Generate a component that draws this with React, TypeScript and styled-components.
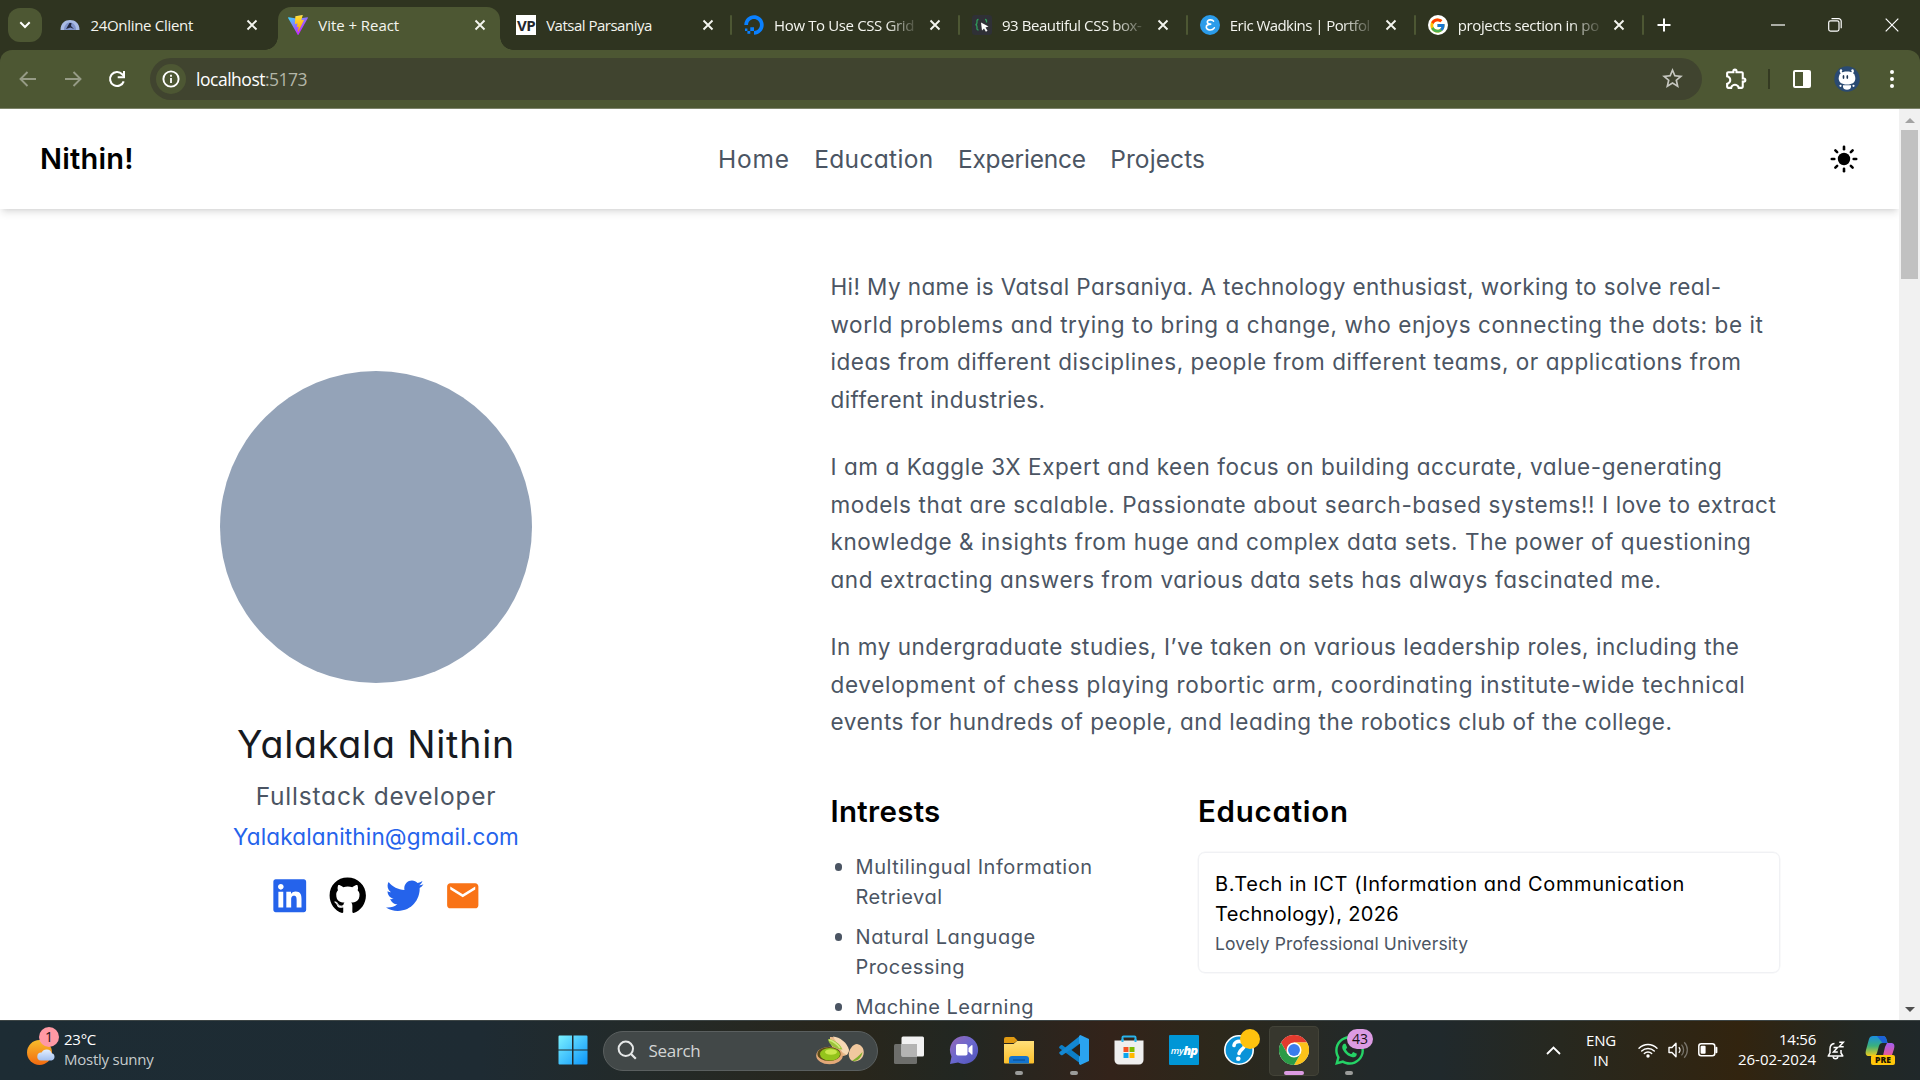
import React from "react";
import styled, { createGlobalStyle } from "styled-components";
import { FaGithub, FaLinkedin, FaTwitter, FaWhatsapp, FaDigitalOcean } from "react-icons/fa";
import { MdEmail, MdStarBorder, MdOutlineExtension } from "react-icons/md";
import { FcGoogle } from "react-icons/fc";

const uiFont = `"Open Sans", "Noto Sans", sans-serif`;
const pageFont = `Inter, "Open Sans", sans-serif`;

const GlobalStyle = createGlobalStyle`
  * { box-sizing: border-box; }
  html, body { margin: 0; padding: 0; overflow: hidden; }
  svg { display: block; flex: none; }
`;

const Screen = styled.div`
  width: 1920px;
  height: 1080px;
  display: flex;
  flex-direction: column;
  overflow: hidden;
  background: #fff;
  font-family: ${uiFont};
`;

const Text = styled.span<{ $ls?: number }>`
  display: block;
  white-space: nowrap;
  letter-spacing: ${(p) => p.$ls ?? 0}px;
`;

/* ---------- Browser chrome ---------- */

const TabStrip = styled.div`
  height: 50px;
  flex: none;
  display: flex;
  align-items: center;
  background: #2f3420;
`;

const TabSearch = styled.div`
  width: 34px;
  height: 34px;
  margin: 0 8.4px 0 8px;
  border-radius: 12px;
  background: #4d5733;
  display: flex;
  align-items: center;
  justify-content: center;
`;

const TabItem = styled.div<{ $active?: boolean; $divider?: boolean }>`
  position: relative;
  width: 227.9px;
  height: 50px;
  flex: none;
  display: flex;
  align-items: center;
  padding: 0 20.5px 0 10px;
  ${(p) =>
    p.$active &&
    `&::before {
      content: "";
      position: absolute;
      left: 0; top: 7px; bottom: 0; width: 222px;
      background: #4d5733;
      border-radius: 13px 13px 0 0;
    }
    &::after {
      content: "";
      position: absolute;
      left: -13px; bottom: 0; width: 248px; height: 13px;
      background:
        radial-gradient(circle at 0 0, transparent 12.5px, #4d5733 13px) left / 13px 13px no-repeat,
        radial-gradient(circle at 100% 0, transparent 12.5px, #4d5733 13px) right / 13px 13px no-repeat;
    }`}
  ${(p) =>
    p.$divider &&
    `&::after {
      content: "";
      position: absolute;
      right: 2px; top: 15px; width: 2px; height: 20px;
      border-radius: 1px;
      background: #4d5733;
    }`}
`;

const TabContent = styled.div`
  position: relative;
  z-index: 1;
  flex: 1;
  display: flex;
  align-items: center;
  justify-content: space-between;
`;

const TabTitle = styled.div<{ $fade?: boolean }>`
  width: 142px;
  margin-left: 10px;
  margin-right: auto;
  overflow: hidden;
  font-size: 15px;
  line-height: 22px;
  color: #f4f5ef;
  ${(p) => p.$fade && `mask-image: linear-gradient(90deg, #000 112px, transparent 146px);`}
`;

const NewTab = styled.div`
  width: 40px;
  margin-left: -2px;
  display: flex;
  justify-content: center;
`;

const WindowButtons = styled.div`
  margin-left: auto;
  display: grid;
  grid-template-columns: repeat(3, 57px);
  justify-items: center;
  align-items: center;
`;

const ToolbarBack = styled.div`
  height: 59px;
  flex: none;
  background: #2f3420;
`;

const Toolbar = styled.div`
  height: 59px;
  display: flex;
  align-items: center;
  padding: 0 0 1px 17px;
  background: #4d5733;
  border-bottom: 1px solid #7c8369;
  border-radius: 12px 12px 0 0;
`;

const NavButtons = styled.div`
  width: 133px;
  display: flex;
  gap: 22.5px;
`;

const AddressBar = styled.div`
  width: 1552px;
  height: 42px;
  display: flex;
  align-items: center;
  padding: 0 17px 0 6px;
  border-radius: 21px;
  background: #40442f;
  font-size: 17.5px;
  line-height: 24px;
  color: #fff;
`;

const SiteInfo = styled.div`
  width: 30px;
  height: 30px;
  margin-right: 10px;
  border-radius: 50%;
  background: #4d5733;
  display: flex;
  align-items: center;
  justify-content: center;
`;

const Port = styled(Text)`
  flex: 1;
  color: #b3b6a8;
`;

const Actions = styled.div`
  flex: 1;
  display: flex;
  align-items: center;
  padding-left: 22px;
`;

const ActionDivider = styled.div`
  width: 2px;
  height: 20px;
  margin: 0 22px 0 19px;
  background: #343a22;
`;

const ProfileButton = styled.div`
  margin: 0 29px 0 22px;
`;

/* ---------- Web page ---------- */

const Viewport = styled.div`
  height: 911px;
  flex: none;
  display: flex;
`;

const Page = styled.div`
  width: 1899px;
  overflow: hidden;
  font-family: ${pageFont};
  font-feature-settings: "cv11";
  color: #4b5563;
`;

const Scrollbar = styled.div`
  width: 21px;
  display: flex;
  flex-direction: column;
  align-items: center;
  padding: 9px 0 8px;
  background: #f1f1f1;
`;

const Thumb = styled.div`
  width: 17px;
  height: 149px;
  margin: 7px 0 auto;
  background: #c1c1c1;
`;

const Navbar = styled.header`
  height: 100px;
  display: grid;
  grid-template-columns: 678px 1fr 30px;
  align-items: center;
  padding: 0 40px;
  background: #fff;
  box-shadow: 0 5px 7.5px -1px rgba(0, 0, 0, 0.1), 0 2.5px 5px -2.5px rgba(0, 0, 0, 0.1);
`;

const Brand = styled.div`
  font-size: 29px;
  font-weight: 600;
  line-height: 40px;
  color: #000;
`;

const NavLinks = styled.nav`
  display: flex;
  gap: 24.3px;
  font-size: 24.5px;
  line-height: 35px;
`;

const Main = styled.main`
  display: grid;
  grid-template-columns: 752px 950px;
  column-gap: 78.5px;
  padding-top: 59px;
`;

const Profile = styled.section`
  display: flex;
  flex-direction: column;
  align-items: center;
  padding-top: 103px;
`;

const Avatar = styled.div`
  width: 312px;
  height: 312px;
  border-radius: 50%;
  background: #94a3b8;
`;

const Name = styled.h1`
  margin: 39px 0 0;
  font-size: 37.5px;
  font-weight: 400;
  line-height: 45px;
  color: #171a1f;
`;

const Role = styled.div`
  margin-top: 12px;
  font-size: 24.5px;
  line-height: 35px;
`;

const Email = styled.div`
  margin-top: 5px;
  font-size: 22.5px;
  line-height: 35px;
  color: #2563eb;
`;

const Socials = styled.div`
  display: flex;
  gap: 20px;
  margin-top: 22.5px;
`;

const About = styled.section`
  display: flex;
  flex-direction: column;
`;

const Paragraph = styled.p`
  margin: 0 0 30px;
  font-size: 22.5px;
  line-height: 37.5px;
`;

const Columns = styled.div`
  display: grid;
  grid-template-columns: 367.5px 582px;
  padding-top: 18.5px;
`;

const Heading = styled.h2`
  margin: 0 0 18px;
  font-size: 29.5px;
  font-weight: 600;
  line-height: 45px;
  color: #000;
`;

const List = styled.ul`
  margin: 0;
  padding: 0;
  list-style: none;
  display: flex;
  flex-direction: column;
  gap: 10px;
`;

const ListItem = styled.li`
  display: flex;
  font-size: 20px;
  line-height: 30px;
  &::before {
    content: "";
    width: 7.5px;
    height: 7.5px;
    margin: 11px 13.5px 0 4px;
    border-radius: 50%;
    background: #4b5563;
  }
`;

const Card = styled.div`
  height: 121px;
  padding: 16px 16px 0;
  border: 1.25px solid #f0f1f4;
  border-radius: 7px;
  box-shadow: 0 0 0 0.5px #f3f4f6;
`;

const Degree = styled.div`
  font-size: 20px;
  line-height: 30px;
  color: #000;
`;

const School = styled.div`
  font-size: 17.5px;
  line-height: 30px;
`;

/* ---------- Taskbar ---------- */

const Taskbar = styled.footer`
  height: 60px;
  flex: none;
  display: flex;
  align-items: center;
  border-top: 1px solid #3d4545;
  color: #fff;
  background: linear-gradient(
    90deg,
    #1d2c34 0,
    #1e2b33 480px,
    #232a29 640px,
    #29261b 850px,
    #222722 960px,
    #33231a 1110px,
    #2c281b 1220px,
    #22292a 1370px,
    #20292c 1440px,
    #27281f 1560px,
    #32240f 1740px,
    #222824 1860px,
    #20282a 1920px
  );
`;

const Weather = styled.div`
  width: 545px;
  display: flex;
  align-items: center;
  padding: 0 0 4px 24px;
  gap: 4px;
  font-size: 15px;
  line-height: 20px;
`;

const Muted = styled(Text)`
  color: #c6cbcd;
`;

const WeatherIcon = styled.div`
  position: relative;
  width: 36px;
  height: 44px;
  display: flex;
  align-items: flex-end;
  padding-bottom: 2px;
`;

const Badge = styled.span<{ $bg: string; $w: number; $right: number; $top: number }>`
  position: absolute;
  right: ${(p) => p.$right}px;
  top: ${(p) => p.$top}px;
  width: ${(p) => p.$w}px;
  height: 20px;
  border-radius: 10px;
  background: ${(p) => p.$bg};
  color: #1a1014;
  font-size: 14px;
  line-height: 20px;
  text-align: center;
`;

const SearchBox = styled.div`
  width: 275px;
  height: 40px;
  margin: 0 3.5px 0 3px;
  display: flex;
  align-items: center;
  padding: 0 13px 1px 13px;
  border: 1px solid #5a5f5f;
  border-radius: 20px;
  background: #424848;
  font-size: 17px;
  color: #d3d5d5;
`;

const SearchLabel = styled(Text)`
  flex: 1;
  margin-left: 11.5px;
`;

const Slot = styled.div<{ $active?: boolean; $indicator?: "open" | "focused" }>`
  position: relative;
  width: ${(p) => (p.$active ? 50 : 55)}px;
  height: 50px;
  margin: ${(p) => (p.$active ? "0 2.5px" : 0)};
  flex: none;
  display: flex;
  align-items: center;
  justify-content: center;
  padding-bottom: 1px;
  ${(p) => p.$active && `background: #37372e; border-radius: 5px; box-shadow: inset 0 0 0 1px #434338;`}
  ${(p) =>
    p.$indicator &&
    `&::after {
      content: "";
      position: absolute;
      bottom: 1px;
      width: ${p.$indicator === "focused" ? 20 : 8}px;
      height: 4px;
      border-radius: 2px;
      background: ${p.$indicator === "focused" ? "#dc9be3" : "#9b9c9a"};
    }`}
`;

const MyHp = styled.div`
  width: 30px;
  height: 30px;
  display: flex;
  align-items: center;
  justify-content: center;
  background: #0096d6;
  border-radius: 1px;
  font-size: 9.5px;
  font-style: italic;
  font-weight: 600;
  letter-spacing: -0.3px;
  b { font-size: 13px; letter-spacing: -1px; }
`;

const Tray = styled.div`
  margin-left: auto;
  padding: 0 16px 1px 0;
  display: flex;
  align-items: center;
  font-size: 15px;
  line-height: 20px;
`;

const TrayCell = styled.div<{ $w: number; $align?: string; $lift?: number }>`
  width: ${(p) => p.$w}px;
  padding-bottom: ${(p) => p.$lift ?? 0}px;
  display: flex;
  flex-direction: column;
  align-items: ${(p) => p.$align ?? "center"};
`;

const Copilot = styled.div`
  position: relative;
  width: 30px;
  height: 30px;
`;

const PreTag = styled.span`
  position: absolute;
  left: 6px;
  bottom: 0;
  width: 24px;
  height: 10px;
  border-radius: 2px;
  background: #ffc60a;
  color: #1b1300;
  font-size: 8.5px;
  font-weight: 800;
  line-height: 10px;
  text-align: center;
`;

/* ---------- Icons ---------- */

const CloseIcon = () => (
  <svg width="12" height="12" viewBox="0 0 12 12">
    <path d="M1.500 1.500l9 9M10.500 1.500l-9 9" stroke="#f4f5ef" strokeWidth="1.900" />
  </svg>
);

const DomeIcon = () => (
  <svg width="20" height="20" viewBox="0 0 20 20">
    <path d="M0.500 15C0.500 8 5 5 10 5s9.500 3 9.500 10z" fill="#a9bbe4" />
    <path d="M4 15c0-5 3-7.500 6-7.500s6 2.500 6 7.500z" fill="#7f93c9" />
    <path d="M6 14l3.500-6h2L11 11l3 3-3.500-1.500z" fill="#20263d" />
  </svg>
);

const ViteIcon = () => (
  <svg width="20" height="20" viewBox="0 0 256 257">
    <defs>
      <linearGradient id="va" x1="0" x2="0.58" y1="0.07" y2="0.79">
        <stop offset="0" stopColor="#41d1ff" />
        <stop offset="1" stopColor="#bd34fe" />
      </linearGradient>
      <linearGradient id="vb" x1="0.43" x2="0.5" y1="0.02" y2="0.89">
        <stop offset="0" stopColor="#ffea83" />
        <stop offset="0.08" stopColor="#ffdd35" />
        <stop offset="1" stopColor="#ffa800" />
      </linearGradient>
    </defs>
    <path fill="url(#va)" d="M255 37.900L134.900 252.700c-2.500 4.400-8.800 4.500-11.300 0L.9 37.900c-2.700-4.800 1.400-10.600 6.800-9.700l120.500 21.500c.8.100 1.600.1 2.300 0l117.900-21.500c5.400-1 9.500 4.900 6.600 9.700z" />
    <path fill="url(#vb)" d="M185.400.1L96.400 17.500c-1.500.3-2.500 1.500-2.600 3l-5.500 92.400c-.1 2.200 1.900 3.900 4 3.400l24.800-5.700c2.300-.5 4.400 1.500 3.900 3.800l-7.400 36.100c-.5 2.400 1.800 4.500 4.100 3.800l15.300-4.700c2.400-.7 4.600 1.400 4.100 3.800l-11.700 56.600c-.7 3.500 4 5.500 5.900 2.500l1.300-2 72.500-144.700c1.200-2.400-.9-5.200-3.500-4.700l-25.500 4.900c-2.400.5-4.400-1.800-3.800-4.100l16.700-57.700c.7-2.300-1.300-4.600-3.600-4.100z" />
  </svg>
);

const VpIcon = styled.div`
  width: 20px;
  height: 20px;
  flex: none;
  background: #fff;
  color: #23262d;
  font: 700 15px/20px "Open Sans", sans-serif;
  letter-spacing: -0.5px;
  text-align: center;
`;

const CursorIcon = () => (
  <svg width="20" height="20" viewBox="0 0 20 20">
    <rect width="20" height="20" rx="3" fill="#2f3036" />
    <path d="M6.500 4.500c-2 0-1.500 1.500-1.500 3s-.5 2-1.500 2.200c1 .2 1.500.8 1.500 2.300s-.5 3 1.500 3M13 4.500c2 0 1.500 1.500 1.500 3" fill="none" stroke="#2f9e5b" strokeWidth="1.300" />
    <path d="M9 7.500l7.500 4-3 1 2 3.200-1.600 1-1.900-3.300-2 2z" fill="#fff" />
  </svg>
);

const EricIcon = () => (
  <svg width="20" height="20" viewBox="0 0 20 20">
    <circle cx="10" cy="10" r="10" fill="#2b9cea" />
    <path d="M13.500 6.200C12.500 4.300 7 4.300 7.300 7.200c.2 1.700 2 2.100 4 2-3.300 0-5.300 1-5 3.200.4 3.300 6.200 3.300 8 .4" fill="none" stroke="#fff" strokeWidth="1.600" strokeLinecap="round" />
  </svg>
);

const GoogleBubble = styled.div`
  width: 20px;
  height: 20px;
  flex: none;
  border-radius: 50%;
  background: #fff;
  display: flex;
  align-items: center;
  justify-content: center;
`;

const ArrowIcon = ({ flip }: { flip?: boolean }) => (
  <svg width="22" height="22" viewBox="0 0 22 22">
    <path
      d={flip ? "M3 11h15.500M11.500 4l7 7-7 7" : "M19 11H3.500M10.500 4l-7 7 7 7"}
      fill="none" stroke="#969b86" strokeWidth="1.900"
    />
  </svg>
);

const ReloadIcon = () => (
  <svg width="22" height="22" viewBox="0 0 22 22">
    <path d="M17.700 13.300A7 7 0 1 1 16.200 6.200L18 8" fill="none" stroke="#fff" strokeWidth="2.100" />
    <path d="M18 3v6.300h-6.300" fill="none" stroke="#fff" strokeWidth="2" />
  </svg>
);

const InfoIcon = () => (
  <svg width="18" height="18" viewBox="0 0 18 18">
    <circle cx="9" cy="9" r="7.600" fill="none" stroke="#fff" strokeWidth="1.900" />
    <path d="M9 8v5M9 4.800v1.900" stroke="#fff" strokeWidth="1.800" />
  </svg>
);

const SidePanelIcon = () => (
  <svg width="20" height="20" viewBox="0 0 20 20">
    <path d="M3 1h14a2 2 0 0 1 2 2v14a2 2 0 0 1-2 2H3a2 2 0 0 1-2-2V3a2 2 0 0 1 2-2zm0 2v14h8V3z" fill="#fff" />
  </svg>
);

const AvatarIcon = () => (
  <svg width="26" height="26" viewBox="0 0 26 26">
    <circle cx="13" cy="13" r="12.700" fill="#2a4a72" />
    <circle cx="7" cy="4.500" r="1.200" fill="#fff" />
    <circle cx="18.500" cy="4.500" r="1.200" fill="#fff" />
    <path d="M13 5.500c5.500 0 8.300 2.500 8.300 7 0 3.800-2.800 6-8.300 6s-8.300-2.200-8.300-6c0-4.500 2.800-7 8.300-7z" fill="#fff" />
    <path d="M6.300 5l2.200 3.500M19.300 5l-2.200 3.500" stroke="#fff" strokeWidth="1.800" />
    <path d="M9 19.200h8v1.500c0 2-1.800 3-4 3s-4-1-4-3z" fill="#fff" />
    <circle cx="6.500" cy="19.800" r="1.100" fill="#fff" />
    <circle cx="19.500" cy="19.800" r="1.100" fill="#fff" />
    <ellipse cx="9.500" cy="11" rx="0.900" ry="1.900" fill="#1d3350" />
    <ellipse cx="13.300" cy="11" rx="0.900" ry="1.900" fill="#1d3350" />
  </svg>
);

const MenuDots = () => (
  <svg width="6" height="20" viewBox="0 0 6 20">
    <circle cx="3" cy="3" r="2" fill="#fff" />
    <circle cx="3" cy="10" r="2" fill="#fff" />
    <circle cx="3" cy="17" r="2" fill="#fff" />
  </svg>
);

const SunIcon = () => (
  <svg width="30" height="30" viewBox="-15 -15 30 30">
    <circle r="6.200" fill="#000" />
    {[0, 45, 90, 135, 180, 225, 270, 315].map((a) => (
      <path key={a} d="M0 -12.200V-9.700" transform={`rotate(${a})`} stroke="#000" strokeWidth="2.600" strokeLinecap="round" />
    ))}
  </svg>
);

const WeatherGlyph = () => (
  <svg width="32" height="38" viewBox="0 0 32 38">
    <defs>
      <linearGradient id="sun" x1="0" y1="0" x2="0" y2="1">
        <stop offset="0" stopColor="#f8bd2c" />
        <stop offset="1" stopColor="#f26a10" />
      </linearGradient>
      <linearGradient id="cloud" x1="0" y1="0" x2="0" y2="1">
        <stop offset="0" stopColor="#e3efff" />
        <stop offset="1" stopColor="#a3c0f0" />
      </linearGradient>
    </defs>
    <circle cx="15.500" cy="21.500" r="12.500" fill="url(#sun)" />
    <path d="M17 29.500a4 4 0 0 1 .6-8 5.500 5.500 0 0 1 10.200.8 3.700 3.700 0 0 1-.3 7.200z" fill="url(#cloud)" />
  </svg>
);

const WindowsIcon = () => (
  <svg width="30" height="30" viewBox="0 0 30 30">
    <defs>
      <linearGradient id="win" x1="0" y1="0" x2="30" y2="30" gradientUnits="userSpaceOnUse">
        <stop offset="0" stopColor="#7df3ff" />
        <stop offset="1" stopColor="#0a93fa" />
      </linearGradient>
    </defs>
    <path d="M1.500.5H14v14H.5v-13a1 1 0 0 1 1-1zM15.500.5h13a1 1 0 0 1 1 1v13h-14zM.5 15.500H14v14H1.500a1 1 0 0 1-1-1zM15.500 15.500h14v13a1 1 0 0 1-1 1h-13z" fill="url(#win)" />
  </svg>
);

const SearchGlyph = () => (
  <svg width="20" height="20" viewBox="0 0 20 20">
    <circle cx="8.800" cy="8.800" r="7.200" fill="none" stroke="#e6e8e8" strokeWidth="2" />
    <path d="M13.800 13.800l5 5" stroke="#e6e8e8" strokeWidth="2.200" />
  </svg>
);

const Pistachio = () => (
  <svg width="48" height="29" viewBox="0 0 48 29">
    <path d="M14 1c8-1 17 6 19 14-1 4-4 5-7 5C19 18 13 8 14 1z" fill="#e8b98a" />
    <path d="M17 .5c7 .5 14 6 16 13.500l-2 5-5-3z" fill="#f6d8b4" />
    <path d="M12 3c4 0 12 4 14.500 10.500C20 14 13 9.500 12 3z" fill="#9cc43a" />
    <path d="M13 4c4 1 8 4 11 8" fill="none" stroke="#d0ea7c" strokeWidth="1.500" />
    <ellipse cx="13.500" cy="19.500" rx="13.300" ry="8.800" fill="#e3a878" />
    <ellipse cx="13" cy="18" rx="11.600" ry="6.900" fill="#5c4d16" />
    <ellipse cx="14" cy="18.200" rx="10" ry="6.300" fill="#94c41c" />
    <ellipse cx="15" cy="16" rx="6" ry="2.800" fill="#cbe84c" />
    <path d="M41 8c6 1 8 7 6 12-2 5-9 7-12 4s-3-8 0-12c2-3 4-4 6-4z" fill="#f0c89e" />
    <path d="M46.500 16c-1 6-5 9.500-10.500 9C39 23 43 20 46.500 16z" fill="#7fae2c" />
  </svg>
);

const TaskViewIcon = () => (
  <svg width="30" height="28" viewBox="0 0 30 28">
    <rect x="0" y="8" width="23" height="20" rx="1.500" fill="#6d6e6b" />
    <rect x="7.500" y="0.500" width="22.500" height="20" rx="1.500" fill="#f2f2f2" />
    <rect x="7.500" y="8" width="15.500" height="12.500" fill="#b4b4b3" />
  </svg>
);

const TeamsIcon = () => (
  <svg width="30" height="30" viewBox="0 0 30 30">
    <defs>
      <linearGradient id="tm" x1="0" y1="0" x2="1" y2="1">
        <stop offset="0" stopColor="#9867b5" />
        <stop offset="0.5" stopColor="#6a68cf" />
        <stop offset="1" stopColor="#4f52b8" />
      </linearGradient>
    </defs>
    <path d="M15 1a14 14 0 1 1-6 26.600L1 29l1.500-7.500A14 14 0 0 1 15 1z" fill="url(#tm)" />
    <rect x="7" y="9" width="11.500" height="11.500" rx="1.800" fill="#fff" />
    <path d="M19.500 13l3-2.800q1-.7 1 .6v8q0 1.300-1 .6l-3-2.800z" fill="#fff" />
  </svg>
);

const ExplorerIcon = () => (
  <svg width="30" height="30" viewBox="0 0 30 30">
    <defs>
      <linearGradient id="fd" x1="0" y1="0" x2="0" y2="1">
        <stop offset="0" stopColor="#ffe07a" />
        <stop offset="1" stopColor="#fcbf2b" />
      </linearGradient>
    </defs>
    <path d="M0 4a2 2 0 0 1 2-2h8l3.500 3.500L10 8H0z" fill="#e09a12" />
    <path d="M0 9h9.500L13 6h17v21.500a1 1 0 0 1-1 1H1a1 1 0 0 1-1-1z" fill="url(#fd)" />
    <path d="M5 28.500V24a3 3 0 0 1 3-3h14a3 3 0 0 1 3 3v4.500z" fill="#1374cf" />
    <path d="M9 25h12" stroke="#0b529b" strokeWidth="1.300" />
  </svg>
);

const CodeIcon = () => (
  <svg width="30" height="30" viewBox="0 0 30 30">
    <path d="M22 .5L8.500 14 3.500 10.200Q2.600 9.600 1.800 10.300L.5 11.500q-.8.900 0 1.700L22 29z" fill="#0c7ec6" />
    <path d="M21.500 8L3.600 20q-.9.600-1.700-.1L.6 18.700q-.8-.9 0-1.700L21 .8z" fill="#1488d3" />
    <path d="M21.300 0L30 4v22l-8.700 4-1.300-1V22V8V1z" fill="#2aa3f0" />
    <path d="M21 8.500v13L12.500 15z" fill="#2b2219" />
  </svg>
);

const StoreIcon = () => (
  <svg width="30" height="30" viewBox="0 0 30 30">
    <path d="M8.500 7V2.500a1 1 0 0 1 1-1h11a1 1 0 0 1 1 1V7" fill="none" stroke="#29b3ec" strokeWidth="2" />
    <path d="M.5 5.500h29V25a4.500 4.500 0 0 1-4.500 4.500H5A4.500 4.500 0 0 1 .5 25z" fill="#efefef" />
    <path d="M8.500 7V4M21.500 7V4" stroke="#29b3ec" strokeWidth="2" />
    <path d="M9.500 12h5v5h-5z" fill="#f35325" />
    <path d="M15.500 12h5v5h-5z" fill="#7fba00" />
    <path d="M9.500 18h5v5h-5z" fill="#0aa4ef" />
    <path d="M15.500 18h5v5h-5z" fill="#ffb900" />
  </svg>
);

const HelpIcon = () => (
  <svg width="30" height="30" viewBox="0 0 30 30">
    <circle cx="15" cy="15" r="14.200" fill="#0a93d8" stroke="#fff" strokeWidth="1.600" />
    <path d="M10 10.500c.5-6 11.500-5 10.500.5-.6 3-4.500 3.500-5.500 7.500" fill="none" stroke="#fff" strokeWidth="3.600" strokeLinecap="round" />
    <circle cx="14.300" cy="23.800" r="2.300" fill="#fff" />
  </svg>
);

const ChromeIcon = () => (
  <svg width="30" height="30" viewBox="0 0 48 48">
    <circle cx="24" cy="24" r="24" fill="#fff" />
    <path d="M24 12h20.800A24 24 0 0 0 3.200 12l10.400 18z" fill="#e33b2e" />
    <path d="M34.400 30L24 48a24 24 0 0 0 20.800-36H24z" fill="#fcc319" />
    <path d="M13.600 30L3.200 12A24 24 0 0 0 24 48l10.400-18z" fill="#2b9b47" />
    <circle cx="24" cy="24" r="12" fill="#fff" />
    <circle cx="24" cy="24" r="9.500" fill="#3b7ded" />
  </svg>
);

const ChevronUp = () => (
  <svg width="15" height="9" viewBox="0 0 15 9">
    <path d="M1 8l6.500-6.500L14 8" fill="none" stroke="#fff" strokeWidth="1.800" />
  </svg>
);

const WifiIcon = () => (
  <svg width="20" height="16" viewBox="0 0 20 16">
    <path d="M1 6.200a12.700 12.700 0 0 1 18 0M3.700 9a9 9 0 0 1 12.600 0M6.300 11.600a5.200 5.200 0 0 1 7.400 0" fill="none" stroke="#fff" strokeWidth="1.400" strokeLinecap="round" />
    <circle cx="10" cy="14" r="1.700" fill="#fff" />
  </svg>
);

const VolumeIcon = () => (
  <svg width="20" height="18" viewBox="0 0 20 18">
    <path d="M1 6.500h3l4-4.200v13.400L4 11.500H1z" fill="none" stroke="#fff" strokeWidth="1.400" strokeLinejoin="round" />
    <path d="M10.800 6.200a4 4 0 0 1 0 5.600" fill="none" stroke="#fff" strokeWidth="1.300" />
    <path d="M13.500 3.600a8 8 0 0 1 0 10.800M16.200 1.300a11 11 0 0 1 0 15.400" fill="none" stroke="#77736a" strokeWidth="1.300" />
  </svg>
);

const BatteryIcon = () => (
  <svg width="20" height="14" viewBox="0 0 20 14">
    <rect x="0.800" y="0.800" width="16" height="12" rx="2.500" fill="none" stroke="#fff" strokeWidth="1.500" />
    <rect x="2.600" y="2.800" width="5" height="8" rx="1" fill="#fff" />
    <path d="M18.400 4.800v4.400" stroke="#fff" strokeWidth="2" strokeLinecap="round" />
  </svg>
);

const BellIcon = () => (
  <svg width="18" height="19" viewBox="0 0 18 19">
    <path d="M7.500 2.500c-2.800.3-4.500 2.700-4.500 5.500v3.800L1.200 15h14.600L14 12V9" fill="none" stroke="#fff" strokeWidth="1.500" strokeLinejoin="round" />
    <path d="M6.200 15.500a2.300 2.300 0 0 0 4.600 0" fill="none" stroke="#fff" strokeWidth="1.500" />
    <path d="M6.500 6.500h4L6.500 11h4.300M12.300 1.300h4l-4 4.400h4.400" fill="none" stroke="#fff" strokeWidth="1.500" />
  </svg>
);

const CopilotIcon = () => (
  <svg width="30" height="28" viewBox="0 0 30 28">
    <defs>
      <linearGradient id="ca" x1="0" y1="0" x2="0" y2="1">
        <stop offset="0" stopColor="#1a8fe0" />
        <stop offset="0.500" stopColor="#3ab07c" />
        <stop offset="1" stopColor="#f0cc1c" />
      </linearGradient>
      <linearGradient id="cb" x1="0" y1="0" x2="0" y2="1">
        <stop offset="0" stopColor="#a25ff0" />
        <stop offset="0.600" stopColor="#e3589e" />
        <stop offset="1" stopColor="#f47c50" />
      </linearGradient>
    </defs>
    <path d="M8 1h10c3 0 3.500 3 4.500 7h-5c-2 0-3 1-3.700 3.500L12 18c-.6 2-2 3-4 3H4c-3 0-4-2-3-6L4 4c.6-2 2-3 4-3z" fill="url(#ca)" />
    <path d="M12 1h6c3 0 3.500 3 4.500 7h-5z" fill="#1c62d6" />
    <path d="M22 8h4c3 0 4 2 3 6l-3 9c-.6 2-2 4-5 4h-7c2 0 3-2 3.500-4L20 12z" fill="url(#cb)" />
  </svg>
);

/* ---------- Data ---------- */

type Tab = { title: string; ls: number; icon: React.ReactNode; active?: boolean; divider?: boolean; fade?: boolean };

const tabs: Tab[] = [
  { title: "24Online Client", ls: -0.3, icon: <DomeIcon /> },
  { title: "Vite + React", ls: -0.05, icon: <ViteIcon />, active: true },
  { title: "Vatsal Parsaniya", ls: -0.5, icon: <VpIcon>VP</VpIcon>, divider: true },
  { title: "How To Use CSS Grid", ls: -0.37, icon: <FaDigitalOcean size={20} color="#0a80ff" />, divider: true, fade: true },
  { title: "93 Beautiful CSS box-", ls: -0.43, icon: <CursorIcon />, divider: true, fade: true },
  { title: "Eric Wadkins | Portfol", ls: -0.56, icon: <EricIcon />, divider: true, fade: true },
  { title: "projects section in po", ls: -0.37, icon: <GoogleBubble><FcGoogle size={17} /></GoogleBubble>, divider: true, fade: true },
];

const navLinks: [string, number][] = [
  ["Home", 0.8],
  ["Education", 0.35],
  ["Experience", -0.2],
  ["Projects", 0.1],
];

const paragraphs: [string, number][][] = [
  [
    ["Hi! My name is Vatsal Parsaniya. A technology enthusiast, working to solve real-", 0.402],
    ["world problems and trying to bring a change, who enjoys connecting the dots: be it", 0.579],
    ["ideas from different disciplines, people from different teams, or applications from", 0.557],
    ["different industries.", 0.406],
  ],
  [
    ["I am a Kaggle 3X Expert and keen focus on building accurate, value-generating", 0.567],
    ["models that are scalable. Passionate about search-based systems!! I love to extract", 0.599],
    ["knowledge & insights from huge and complex data sets. The power of questioning", 0.582],
    ["and extracting answers from various data sets has always fascinated me.", 0.585],
  ],
  [
    ["In my undergraduate studies, I’ve taken on various leadership roles, including the", 0.523],
    ["development of chess playing robortic arm, coordinating institute-wide technical", 0.68],
    ["events for hundreds of people, and leading the robotics club of the college.", 0.528],
  ],
];

const interests: [string, number][][] = [
  [["Multilingual Information", 0.57], ["Retrieval", 0.479]],
  [["Natural Language", 0.57], ["Processing", 0.44]],
  [["Machine Learning", 0.44]],
];

export default function App() {
  return (
    <Screen>
      <GlobalStyle />
      <TabStrip>
        <TabSearch>
          <svg width="12" height="8" viewBox="0 0 12 8">
            <path d="M1.300 1.300L6 6l4.700-4.700" fill="none" stroke="#fff" strokeWidth="2" />
          </svg>
        </TabSearch>
        {tabs.map((t) => (
          <TabItem key={t.title} $active={t.active} $divider={t.divider}>
            <TabContent>
              {t.icon}
              <TabTitle $fade={t.fade}>
                <Text $ls={t.ls}>{t.title}</Text>
              </TabTitle>
              <CloseIcon />
            </TabContent>
          </TabItem>
        ))}
        <NewTab>
          <svg width="14" height="14" viewBox="0 0 14 14">
            <path d="M7 .5v13M.5 7h13" stroke="#fff" strokeWidth="2" />
          </svg>
        </NewTab>
        <WindowButtons>
          <svg width="14" height="2"><path d="M0 1h14" stroke="#fff" strokeWidth="1.200" /></svg>
          <svg width="14" height="14" viewBox="0 0 14 14">
            <rect x="0.700" y="2.800" width="10.300" height="10.300" rx="1.800" fill="none" stroke="#fff" strokeWidth="1.200" />
            <path d="M3.500.7h7a2.600 2.600 0 0 1 2.700 2.600v7" fill="none" stroke="#fff" strokeWidth="1.200" />
          </svg>
          <svg width="14" height="14" viewBox="0 0 14 14">
            <path d="M.7.7l12.600 12.600M13.300.7L.7 13.300" stroke="#fff" strokeWidth="1.200" />
          </svg>
        </WindowButtons>
      </TabStrip>
      <ToolbarBack>
        <Toolbar>
          <NavButtons>
            <ArrowIcon />
            <ArrowIcon flip />
            <ReloadIcon />
          </NavButtons>
          <AddressBar>
            <SiteInfo><InfoIcon /></SiteInfo>
            <Text $ls={-0.479}>localhost</Text>
            <Port $ls={-0.525}>:5173</Port>
            <MdStarBorder size={25} color="#c6c7c0" />
          </AddressBar>
          <Actions>
            <MdOutlineExtension size={25} color="#fff" />
            <ActionDivider />
            <SidePanelIcon />
            <ProfileButton><AvatarIcon /></ProfileButton>
            <MenuDots />
          </Actions>
        </Toolbar>
      </ToolbarBack>

      <Viewport>
        <Page>
          <Navbar>
            <Brand><Text $ls={0.2}>Nithin!</Text></Brand>
            <NavLinks>
              {navLinks.map(([label, ls]) => <Text key={label} $ls={ls}>{label}</Text>)}
            </NavLinks>
            <SunIcon />
          </Navbar>
          <Main>
            <Profile>
              <Avatar />
              <Name><Text $ls={0.807}>Yalakala Nithin</Text></Name>
              <Role><Text $ls={0.8}>Fullstack developer</Text></Role>
              <Email><Text $ls={0.167}>Yalakalanithin@gmail.com</Text></Email>
              <Socials>
                <FaLinkedin size={37.5} color="#2563eb" />
                <FaGithub size={37.5} color="#000" />
                <FaTwitter size={37.5} color="#2563eb" />
                <MdEmail size={37.5} color="#f97316" />
              </Socials>
            </Profile>
            <About>
              {paragraphs.map((lines, i) => (
                <Paragraph key={i}>
                  {lines.map(([line, ls]) => <Text key={line} $ls={ls}>{line}</Text>)}
                </Paragraph>
              ))}
              <Columns>
                <section>
                  <Heading><Text $ls={0.3}>Intrests</Text></Heading>
                  <List>
                    {interests.map((lines, i) => (
                      <ListItem key={i}>
                        <div>{lines.map(([line, ls]) => <Text key={line} $ls={ls}>{line}</Text>)}</div>
                      </ListItem>
                    ))}
                  </List>
                </section>
                <section>
                  <Heading><Text $ls={0.75}>Education</Text></Heading>
                  <Card>
                    <Degree>
                      <Text $ls={0.6}>B.Tech in ICT (Information and Communication</Text>
                      <Text $ls={0.32}>Technology), 2026</Text>
                    </Degree>
                    <School><Text $ls={0.12}>Lovely Professional University</Text></School>
                  </Card>
                </section>
              </Columns>
            </About>
          </Main>
        </Page>
        <Scrollbar>
          <svg width="10" height="5" viewBox="0 0 10 5"><path d="M0 5l5-5 5 5z" fill="#a3a3a3" /></svg>
          <Thumb />
          <svg width="10" height="5" viewBox="0 0 10 5"><path d="M0 0h10L5 5z" fill="#505050" /></svg>
        </Scrollbar>
      </Viewport>

      <Taskbar>
        <Weather>
          <WeatherIcon>
            <WeatherGlyph />
            <Badge $bg="#ff99a4" $w={20} $right={1} $top={0}>1</Badge>
          </WeatherIcon>
          <div>
            <Text $ls={-0.258}>23°C</Text>
            <Muted $ls={-0.247}>Mostly sunny</Muted>
          </div>
        </Weather>
        <Slot><WindowsIcon /></Slot>
        <SearchBox>
          <SearchGlyph />
          <SearchLabel $ls={-0.307}>Search</SearchLabel>
          <Pistachio />
        </SearchBox>
        <Slot><TaskViewIcon /></Slot>
        <Slot><TeamsIcon /></Slot>
        <Slot $indicator="open"><ExplorerIcon /></Slot>
        <Slot $indicator="open"><CodeIcon /></Slot>
        <Slot><StoreIcon /></Slot>
        <Slot><MyHp>my<b>hp</b></MyHp></Slot>
        <Slot>
          <HelpIcon />
          <Badge $bg="#ffc20e" $w={20} $right={6.5} $top={3} />
        </Slot>
        <Slot $active $indicator="focused"><ChromeIcon /></Slot>
        <Slot $indicator="open">
          <FaWhatsapp size={33} color="#25d366" />
          <Badge $bg="#dc9be3" $w={26} $right={3.5} $top={3}>43</Badge>
        </Slot>
        <Tray>
          <TrayCell $w={48}><ChevronUp /></TrayCell>
          <TrayCell $w={48} $lift={1}>
            <Text $ls={-0.182}>ENG</Text>
            <Text>IN</Text>
          </TrayCell>
          <TrayCell $w={8} />
          <TrayCell $w={30}><WifiIcon /></TrayCell>
          <TrayCell $w={30}><VolumeIcon /></TrayCell>
          <TrayCell $w={30}><BatteryIcon /></TrayCell>
          <TrayCell $w={93} $align="flex-end" $lift={3}>
            <Text $ls={-0.25}>14:56</Text>
            <Text $ls={-0.028}>26-02-2024</Text>
          </TrayCell>
          <TrayCell $w={40}><BellIcon /></TrayCell>
          <TrayCell $w={48}>
            <Copilot>
              <CopilotIcon />
              <PreTag>PRE</PreTag>
            </Copilot>
          </TrayCell>
        </Tray>
      </Taskbar>
    </Screen>
  );
}
